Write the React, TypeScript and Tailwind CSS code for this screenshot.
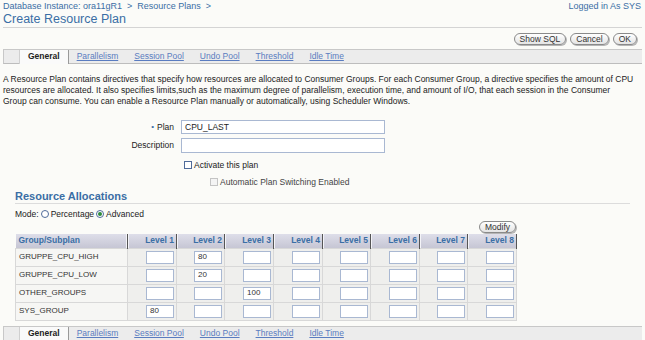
import React from "react";

const tabs = ["Parallelism", "Session Pool", "Undo Pool", "Threshold", "Idle Time"];

const rows = [
  { name: "GRUPPE_CPU_HIGH", values: ["", "80", "", "", "", "", "", ""] },
  { name: "GRUPPE_CPU_LOW", values: ["", "20", "", "", "", "", "", ""] },
  { name: "OTHER_GROUPS", values: ["", "", "100", "", "", "", "", ""] },
  { name: "SYS_GROUP", values: ["80", "", "", "", "", "", "", ""] },
];

const levelWidths = ["w-[49px]", "w-[48px]", "w-[49px]", "w-[49px]", "w-[48px]", "w-[49px]", "w-[48px]", "w-[49px]"];

function PillButton({ label }: { label: string }) {
  return (
    <button className="h-[10px] box-content rounded-full border border-[#8a8a8a] bg-gradient-to-b from-white to-[#e4e4e4] px-[5px] text-[8.5px] leading-[10px] text-[#333] shadow-[1px_1px_0_#b5b5b5]">
      {label}
    </button>
  );
}

function TabBar() {
  return (
    <div className="mx-[3px] flex h-[15px] border-t border-b border-t-[#c8c8c8] border-b-[#bdbdbd] border-l border-l-[#c8c8c8] bg-[#ececec] text-[8.5px] leading-[13px]">
      <div className="w-[15px]" />
      <div className="border-r border-r-[#9a9a9a] border-l border-l-[#d0d0d0] bg-[#fafafa] px-[8px] font-bold text-[#222] h-[14px]">
        General
      </div>
      {tabs.map((t) => (
        <span key={t} className="px-[8px] text-[#5a7cc0] underline">
          {t}
        </span>
      ))}
    </div>
  );
}

export default function App() {
  return (
    <div className="h-[340px] w-[645px] overflow-hidden bg-[#fbfbf8] font-['Liberation_Sans',Arial,sans-serif] text-[#333]">
      {/* Breadcrumbs */}
      <div className="flex h-[11px] items-center justify-between px-[3px] pt-[2px] text-[9px] text-[#3a6ea5]">
        <span>Database Instance: ora11gR1 &nbsp;&gt;&nbsp; Resource Plans &nbsp;&gt;</span>
        <span className="pr-[1px]">Logged in As SYS</span>
      </div>
      <div className="mx-[3px] border-b border-[#d4d4d4] pb-[1px] pt-[1px] text-[12.5px] leading-[14px] text-[#3a6ea5]">
        Create Resource Plan
      </div>

      <div className="mt-[5px] flex justify-end gap-[4px] pr-[8px]">
        <PillButton label="Show SQL" />
        <PillButton label="Cancel" />
        <PillButton label="OK" />
      </div>

      <div className="mt-[4px]">
        <TabBar />
      </div>

      <p className="mt-[10px] whitespace-nowrap px-[3px] text-[8.5px] leading-[11px] text-[#222]">
        A Resource Plan contains directives that specify how resources are allocated to Consumer Groups. For each Consumer Group, a directive specifies the amount of CPU
        <br />
        resources are allocated. It also specifies limits,such as the maximum degree of parallelism, execution time, and amount of I/O, that each session in the Consumer
        <br />
        Group can consume. You can enable a Resource Plan manually or automatically, using Scheduler Windows.
      </p>

      {/* Form */}
      <div className="mt-[13px] grid grid-cols-[174px_204px] gap-x-[7px] gap-y-[4px] text-[8.5px] text-[#222]">
        <label className="flex items-center justify-end">
          <span className="mr-[3px] text-[8px] text-[#3a6ea5]">•</span>Plan
        </label>
        <div className="flex h-[14px] items-center border border-[#a9b8d2] bg-white px-[3px]">CPU_LAST</div>
        <label className="flex items-center justify-end">Description</label>
        <div className="h-[15px] border border-[#a9b8d2] bg-white" />
      </div>
      <div className="ml-[184px] mt-[7px] flex items-center gap-[2px] text-[8.5px] leading-[10px] text-[#222]">
        <span className="inline-block h-[8px] w-[8px] border border-[#4f6b9a] bg-white" />
        Activate this plan
      </div>
      <div className="ml-[210px] mt-[7px] flex items-center gap-[2px] text-[8.5px] leading-[10px] text-[#444]">
        <span className="inline-block h-[8px] w-[8px] border border-[#c4c4c4] bg-[#f4f4f4]" />
        Automatic Plan Switching Enabled
      </div>

      {/* Resource Allocations */}
      <div className="mx-[15px] mt-[3px] border-b border-[#dcdcdc] text-[11px] font-bold leading-[13px] text-[#3a6ea5]">
        Resource Allocations
      </div>
      <div className="ml-[15px] mt-[5px] flex items-center gap-[2px] text-[8.5px] leading-[10px] text-[#222]">
        <span>Mode:</span>
        <span className="inline-block h-[8px] w-[8px] rounded-full border border-[#4f6b9a] bg-white" />
        <span>Percentage</span>
        <span className="flex h-[8px] w-[8px] items-center justify-center rounded-full border border-[#4f6b9a] bg-white">
          <span className="h-[4px] w-[4px] rounded-full bg-[#2c8a3a]" />
        </span>
        <span>Advanced</span>
      </div>

      <div className="ml-[15px] w-[501px]">
        <div className="mt-[2px] flex justify-end">
          <PillButton label="Modify" />
        </div>
        <table className="mt-[1px] w-[501px] table-fixed border-collapse text-[8.5px]">
          <thead>
            <tr className="h-[14px] bg-gradient-to-b from-[#dedee9] to-[#c6c6d4]">
              <th className="w-[112px] border-r border-r-[#555] px-[3px] text-left font-bold leading-[13px] text-[#3a6ea5] shadow-[inset_-1px_0_0_#f4f4f8]">
                Group/Subplan
              </th>
              {levelWidths.map((w, i) => (
                <th
                  key={i}
                  className={`${w} border-r border-r-[#555] px-[2px] text-right font-bold leading-[13px] text-[#3a6ea5] shadow-[inset_1px_0_0_#f4f4f8]`}
                >
                  Level {i + 1}
                </th>
              ))}
            </tr>
          </thead>
          <tbody>
            {rows.map((r) => (
              <tr key={r.name} className="h-[18px]">
                <td className="border border-[#d8d8d8] bg-[#f6f6f4] px-[3px] text-[8px] text-[#333]">{r.name}</td>
                {r.values.map((v, i) => (
                  <td key={i} className="border border-[#d8d8d8] bg-[#efefed] pr-[2px]">
                    <div className="ml-auto flex h-[13px] w-[28px] items-center border border-[#a9b8d2] bg-white pl-[3px] text-[8px]">
                      {v}
                    </div>
                  </td>
                ))}
              </tr>
            ))}
          </tbody>
        </table>
      </div>

      <div className="mt-[5px]">
        <TabBar />
      </div>
    </div>
  );
}
